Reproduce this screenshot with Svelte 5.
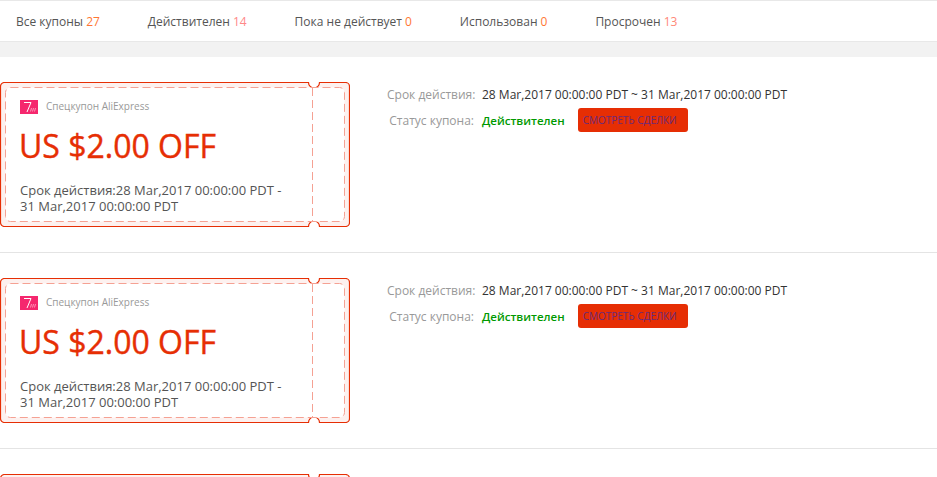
<script>
  const tabs = [
    { label: 'Все купоны', count: 27, color: '#f73' },
    { label: 'Действителен', count: 14, color: '#f88' },
    { label: 'Пока не действует', count: 0, color: '#f73' },
    { label: 'Использован', count: 0, color: '#f73' },
    { label: 'Просрочен', count: 13, color: '#f87' }
  ];
  const coupons = [1, 2, 3];
</script>

<div class="page">
  <nav class="tabs">
    {#each tabs as tab}
      <span class="tab">{tab.label} <em style="color: {tab.color}">{tab.count}</em></span>
    {/each}
  </nav>
  <div class="band"></div>

  {#each coupons as c}
    <section class="row">
      <div class="coupon">
        <svg class="ticket" width="350" height="145" viewBox="0 0 350 145">
          <path class="edge" d="M4.5 .5H308.5A5.5 5.5 0 0 0 319.5 .5H345.5A4 4 0 0 1 349.5 4.5V140.5A4 4 0 0 1 345.5 144.5H319.5A5.5 5.5 0 0 0 308.5 144.5H4.5A4 4 0 0 1 .5 140.5V4.5A4 4 0 0 1 4.5 .5Z" />
          <rect class="dash" x="5.5" y="5.5" width="339" height="134" rx="5" />
          <line class="dash" x1="312.5" y1="6" x2="312.5" y2="139" />
        </svg>
        <!-- the third coupon is cut by the window, only its top edge shows -->
        {#if c < 3}
          <div class="brand">
            <svg class="logo" width="18" height="14" viewBox="0 0 18 14">
              <rect width="18" height="14" fill="#f5286e" />
              <path d="M4 2.5H11L7 12" fill="none" stroke="#fff" stroke-width="1" />
              <path d="M10.5 11.5L11.5 8M12.5 11.5L13.5 8M14.5 11.5L15.5 8" fill="none" stroke="#ffc0d4" stroke-width=".7" />
            </svg>
            <span>Спецкупон AliExpress</span>
          </div>
          <div class="amount">US $2.00 OFF</div>
          <p class="period">Срок действия:28 Mar,2017 00:00:00 PDT - 31 Mar,2017 00:00:00 PDT</p>
        {/if}
      </div>

      {#if c < 3}
        <div class="info">
          <div class="line">
            <span class="key">Срок действия:</span>
            <span class="val">28 Mar,2017 00:00:00 PDT ~ 31 Mar,2017 00:00:00 PDT</span>
          </div>
          <div class="line">
            <span class="key">Статус купона:</span>
            <strong>Действителен</strong>
            <button>СМОТРЕТЬ СДЕЛКИ</button>
          </div>
        </div>
      {/if}
    </section>
  {/each}
</div>

<style>
  :global(body) {
    margin: 0;
    background: #fff;
    overflow: hidden;
  }

  .page {
    height: 477px;
    overflow: hidden;
    font-family: "Open Sans", sans-serif;
    font-size: 12px;
    color: #333;
  }

  .tabs {
    display: flex;
    align-items: center;
    height: 40px;
    padding-left: 16px;
    border-top: 1px solid #e8e8e8;
    border-bottom: 1px solid #e8e8e8;
    color: #555;
  }

  .tab {
    margin-right: 47.9px;
    white-space: nowrap;
  }

  .tab em {
    font-style: normal;
  }

  .band {
    height: 15px;
    background: #f2f2f2;
  }

  .row {
    display: flex;
    height: 170px;
    padding-top: 25px;
    border-bottom: 1px solid #e4e4e4;
  }

  .coupon {
    position: relative;
    box-sizing: border-box;
    flex: none;
    width: 350px;
    height: 145px;
    padding: 18px 60px 0 20px;
  }

  .ticket {
    position: absolute;
    top: 0;
    left: 0;
  }

  .edge {
    fill: #fdf1ef;
    stroke: #e62e04;
    stroke-width: 1.2;
  }

  .dash {
    fill: #fff;
    stroke: #f5a193;
    stroke-dasharray: 8 4;
  }

  .brand {
    position: relative;
    display: flex;
    align-items: flex-start;
    gap: 8px;
    font-size: 10px;
    line-height: 12px;
    color: #999;
  }

  .logo {
    flex: none;
  }

  .amount {
    position: relative;
    margin-top: 10px;
    margin-left: -1px;
    font-size: 32px;
    line-height: 44px;
    font-weight: 500;
    -webkit-text-stroke: 0.4px #e62e04;
    color: #e62e04;
  }

  .period {
    position: relative;
    margin: 14px 0 0;
    font-size: 13px;
    line-height: 16px;
    color: #555;
  }

  .info {
    display: flex;
    flex-direction: column;
    gap: 2px;
    padding-left: 37px;
  }

  .line {
    display: flex;
    align-items: center;
    height: 24px;
    white-space: nowrap;
  }

  .key {
    width: 87px;
    margin-right: 8px;
    text-align: right;
    color: #999;
  }

  .val {
    color: #333;
  }

  strong {
    font-size: 11.5px;
    font-weight: 600;
    color: #090;
  }

  button {
    box-sizing: border-box;
    height: 24px;
    margin-left: 13px;
    padding: 0 5px;
    width: 110px;
    border: 0;
    border-radius: 3px;
    background: #e62e04;
    color: #6b2a7a;
    font: 10px/24px "Open Sans", sans-serif;
    text-align: left;
  }
</style>
